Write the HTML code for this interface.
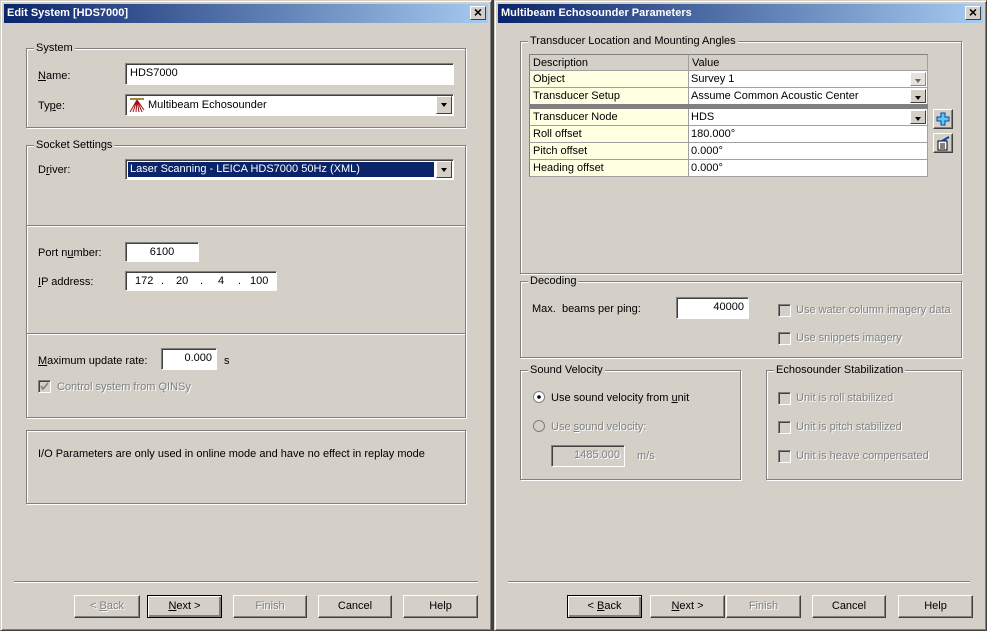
<!DOCTYPE html>
<html><head><meta charset="utf-8">
<style>
*{box-sizing:border-box;margin:0;padding:0}
body{width:987px;height:631px;background:#404040;position:relative;overflow:hidden;font-family:"Liberation Sans",Arial,sans-serif;font-size:11px;color:#000}
.a{position:absolute}
.win{position:absolute;top:0;height:631px;background:#d4d0c8;border:1px solid;border-color:#d4d0c8 #404040 #404040 #d4d0c8;box-shadow:inset 1px 1px #fff,inset -1px -1px #808080}
.title{position:absolute;left:3px;right:3px;top:3px;height:19px;background:linear-gradient(to right,#0a246a,#a6caf0);color:#fff;font-weight:bold;font-size:11px;line-height:19px;padding-left:3px}
.close{position:absolute;right:2px;top:2px;width:16px;height:14px;background:#d4d0c8;border:1px solid;border-color:#fff #404040 #404040 #fff;color:#000;font-size:14px;line-height:11px;text-align:center;font-weight:bold}
.grp{position:absolute;border:1px solid #808080;box-shadow:inset 1px 1px #fff,1px 1px #fff}
.gl{position:absolute;top:-7px;left:7px;background:#d4d0c8;padding:0 2px;line-height:13px}
.in{position:absolute;background:#fff;border:1px solid;border-color:#808080 #fff #fff #808080;box-shadow:inset 1px 1px #404040;line-height:18px;padding:0 4px}
.btn{position:absolute;top:595px;height:23px;border:1px solid;border-color:#fff #404040 #404040 #fff;box-shadow:inset -1px -1px #808080;text-align:center;line-height:20px}
.btn.def{border:1px solid #000;box-shadow:inset 1px 1px #fff,inset -2px -2px #808080}
.dis{color:#808080;text-shadow:1px 1px #fff}
.dd{position:absolute;right:1px;top:1px;width:16px;bottom:1px;background:#d4d0c8;border:1px solid;border-color:#fff #404040 #404040 #fff}
.dd:after{content:"";position:absolute;left:4px;top:6px;border:3px solid transparent;border-top:4px solid #000;border-bottom:0}
.sep{position:absolute;top:581px;height:2px;border-top:1px solid #808080;border-bottom:1px solid #fff}
.cb{position:absolute;width:13px;height:13px;border:1px solid;border-color:#808080 #fff #fff #808080;box-shadow:inset 1px 1px #404040;background:#d4d0c8}
.cell{position:absolute;height:17px;line-height:16px;padding-left:3px;border-right:1px solid #a0a0a0;border-bottom:1px solid #a0a0a0}
u{text-decoration:underline}
</style></head><body>

<div class="win" style="left:0;width:492px">
 <div class="title">Edit System [HDS7000]<div class="close">×</div></div>
</div>
<div class="grp" style="left:26px;top:48px;width:440px;height:80px"><div class="gl">System</div></div>
<div class="a" style="left:38px;top:70px"><u>N</u>ame:</div>
<div class="in" style="left:125px;top:63px;width:329px;height:22px;line-height:18px">HDS7000</div>
<div class="a" style="left:38px;top:100px">Ty<u>p</u>e:</div>
<div class="in" style="left:125px;top:94px;width:329px;height:22px;padding-left:22px;line-height:20px">
 <svg class="a" style="left:3px;top:3px" width="16" height="15" viewBox="0 0 16 15"><path d="M1 1H15" stroke="#806000" stroke-width="1.5"/><g stroke="#a01010" fill="none"><path d="M8 2L1 14M8 2L4 14M8 2L7 14M8 2L10 14M8 2L13 14M8 2L15 12"/></g></svg>
 Multibeam Echosounder<div class="dd"></div></div>

<div class="grp" style="left:26px;top:145px;width:440px;height:273px"><div class="gl">Socket Settings</div></div>
<div class="a" style="left:27px;top:225px;width:438px;height:2px;border-top:1px solid #808080;border-bottom:1px solid #fff"></div>
<div class="a" style="left:27px;top:333px;width:438px;height:2px;border-top:1px solid #808080;border-bottom:1px solid #fff"></div>
<div class="a" style="left:38px;top:164px">D<u>r</u>iver:</div>
<div class="in" style="left:125px;top:159px;width:329px;height:21px;padding:2px">
 <div style="background:#0a246a;color:#fff;height:15px;line-height:15px;padding-left:2px;margin-right:17px;outline:1px dotted #fff">Laser Scanning - LEICA HDS7000 50Hz (XML)</div><div class="dd"></div></div>
<div class="a" style="left:38px;top:247px">Port n<u>u</u>mber:</div>
<div class="in" style="left:125px;top:242px;width:74px;height:20px;text-align:center">6100</div>
<div class="a" style="left:38px;top:276px"><u>I</u>P address:</div>
<div class="in" style="left:125px;top:271px;width:152px;height:20px;padding:0"><span class="a" style="left:9px">172</span><span class="a" style="left:35px">.</span><span class="a" style="left:50px">20</span><span class="a" style="left:74px">.</span><span class="a" style="left:92px">4</span><span class="a" style="left:112px">.</span><span class="a" style="left:124px">100</span></div>
<div class="a" style="left:38px;top:355px"><u>M</u>aximum update rate:</div>
<div class="in" style="left:161px;top:348px;width:56px;height:22px;text-align:right">0.000</div>
<div class="a" style="left:224px;top:355px">s</div>
<div class="cb" style="left:38px;top:380px"><svg class="a" style="left:1px;top:1px" width="9" height="9"><path d="M1 4L3 7L8 1" stroke="#808080" stroke-width="1.6" fill="none"/></svg></div>
<div class="a dis" style="left:57px;top:381px">Control system from QINSy</div>

<div class="grp" style="left:26px;top:430px;width:440px;height:74px"></div>
<div class="a" style="left:38px;top:448px">I/O Parameters are only used in online mode and have no effect in replay mode</div>

<div class="sep" style="left:14px;width:464px"></div>
<div class="btn dis" style="left:74px;width:66px">&lt; <u>B</u>ack</div>
<div class="btn def" style="left:147px;width:75px"><u>N</u>ext &gt;</div>
<div class="btn dis" style="left:233px;width:74px">Finish</div>
<div class="btn" style="left:318px;width:74px">Cancel</div>
<div class="btn" style="left:403px;width:75px">Help</div>

<div class="win" style="left:494px;width:493px">
 <div class="title">Multibeam Echosounder Parameters<div class="close">×</div></div>
</div>
<div class="grp" style="left:520px;top:41px;width:442px;height:233px"><div class="gl">Transducer Location and Mounting Angles</div></div>
<div class="a" style="left:529px;top:54px;width:399px;height:123px;background:#fff;border:1px solid #808080"></div>
<div class="cell" style="left:529px;top:54px;width:160px;background:#d4d0c8;border-top:1px solid #808080;border-left:1px solid #808080">Description</div>
<div class="cell" style="left:689px;top:54px;width:239px;background:#d4d0c8;border-top:1px solid #808080">Value</div>
<div class="cell" style="left:529px;top:71px;width:160px;background:#ffffe1;border-left:1px solid #808080">Object</div>
<div class="cell" style="left:689px;top:71px;width:239px;background:#fff;padding-left:2px">Survey 1<div class="dd" style="opacity:.6"></div></div>
<div class="cell" style="left:529px;top:88px;width:160px;background:#ffffe1;border-left:1px solid #808080">Transducer Setup</div>
<div class="cell" style="left:689px;top:88px;width:239px;background:#fff;padding-left:2px">Assume Common Acoustic Center<div class="dd"></div></div>
<div class="a" style="left:529px;top:104px;width:399px;height:5px;background:#808080"></div>
<div class="cell" style="left:529px;top:109px;width:160px;background:#ffffe1;border-left:1px solid #808080">Transducer Node</div>
<div class="cell" style="left:689px;top:109px;width:239px;background:#fff;padding-left:2px">HDS<div class="dd"></div></div>
<div class="cell" style="left:529px;top:126px;width:160px;background:#ffffe1;border-left:1px solid #808080">Roll offset</div>
<div class="cell" style="left:689px;top:126px;width:239px;background:#fff;padding-left:2px">180.000°</div>
<div class="cell" style="left:529px;top:143px;width:160px;background:#ffffe1;border-left:1px solid #808080">Pitch offset</div>
<div class="cell" style="left:689px;top:143px;width:239px;background:#fff;padding-left:2px">0.000°</div>
<div class="cell" style="left:529px;top:160px;width:160px;background:#ffffe1;border-left:1px solid #808080">Heading offset</div>
<div class="cell" style="left:689px;top:160px;width:239px;background:#fff;padding-left:2px">0.000°</div>
<div class="a" style="left:933px;top:109px;width:20px;height:20px;border:1px solid;border-color:#fff #404040 #404040 #fff;box-shadow:inset -1px -1px #808080">
 <svg class="a" style="left:2px;top:2px" width="14" height="14"><path d="M5 1H9V5H13V9H9V13H5V9H1V5H5Z" fill="#5fc8f0" stroke="#1040a0"/></svg></div>
<div class="a" style="left:933px;top:133px;width:20px;height:20px;border:1px solid;border-color:#fff #404040 #404040 #fff;box-shadow:inset -1px -1px #808080">
 <svg class="a" style="left:2px;top:2px" width="16" height="16"><path d="M2 5H11V14H2Z" fill="#fff" stroke="#000"/><path d="M4 8H9M4 10H9M4 12H9" stroke="#000"/><path d="M6 5L13 1" stroke="#1040a0" stroke-width="2"/></svg></div>

<div class="grp" style="left:520px;top:281px;width:442px;height:77px"><div class="gl">Decoding</div></div>
<div class="a" style="left:532px;top:303px">Max.&nbsp; beams per ping:</div>
<div class="in" style="left:676px;top:297px;width:73px;height:22px;text-align:right">40000</div>
<div class="cb" style="left:778px;top:304px"></div><div class="a dis" style="left:796px;top:304px">Use water column imagery data</div>
<div class="cb" style="left:778px;top:332px"></div><div class="a dis" style="left:796px;top:332px">Use snippets imagery</div>

<div class="grp" style="left:520px;top:370px;width:221px;height:110px"><div class="gl">Sound Velocity</div></div>
<svg class="a" style="left:533px;top:391px" width="12" height="12"><circle cx="6" cy="6" r="5.5" fill="#fff" stroke="#808080"/><circle cx="6" cy="6" r="1.8" fill="#000"/></svg>
<div class="a" style="left:551px;top:392px">Use sound velocity from <u>u</u>nit</div>
<svg class="a" style="left:533px;top:420px" width="12" height="12"><circle cx="6" cy="6" r="5.5" fill="#d4d0c8" stroke="#808080"/></svg>
<div class="a dis" style="left:551px;top:421px">Use <u>s</u>ound velocity:</div>
<div class="in dis" style="left:551px;top:445px;width:74px;height:22px;text-align:right;background:#d4d0c8">1485.000</div>
<div class="a dis" style="left:637px;top:450px">m/s</div>

<div class="grp" style="left:766px;top:370px;width:196px;height:110px"><div class="gl">Echosounder Stabilization</div></div>
<div class="cb" style="left:778px;top:392px"></div><div class="a dis" style="left:796px;top:392px">Unit is roll stabilized</div>
<div class="cb" style="left:778px;top:421px"></div><div class="a dis" style="left:796px;top:421px">Unit is pitch stabilized</div>
<div class="cb" style="left:778px;top:450px"></div><div class="a dis" style="left:796px;top:450px">Unit is heave compensated</div>

<div class="sep" style="left:508px;width:462px"></div>
<div class="btn def" style="left:567px;width:75px">&lt; <u>B</u>ack</div>
<div class="btn" style="left:650px;width:75px"><u>N</u>ext &gt;</div>
<div class="btn dis" style="left:726px;width:75px">Finish</div>
<div class="btn" style="left:812px;width:74px">Cancel</div>
<div class="btn" style="left:898px;width:75px">Help</div>
</body></html>
